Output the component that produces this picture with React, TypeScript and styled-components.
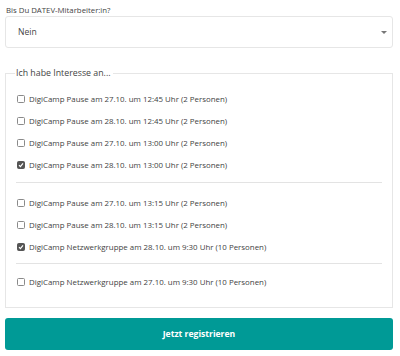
import React from "react";
import styled, { createGlobalStyle } from "styled-components";

const Global = createGlobalStyle`
  html, body { margin: 0; padding: 0; background: #fff; }
  body { font-family: "Open Sans", "Noto Sans", sans-serif; color: #444; }
`;

const Page = styled.div`
  width: 388px;
  margin-left: 5px;
  display: flex;
  flex-direction: column;
`;

const Label = styled.div`
  font-size: 7.8px;
  line-height: 12px;
  color: #444;
  padding: 4px 0 0 1px;
  height: 12px;
`;

const Select = styled.div`
  box-sizing: border-box;
  height: 32px;
  border: 1px solid #e6e6e6;
  border-radius: 3px;
  display: flex;
  align-items: center;
  justify-content: space-between;
  padding: 0 5px 0 12px;
  font-size: 8.6px;
  color: #444;
`;

const Caret = styled.span`
  width: 0;
  height: 0;
  border-left: 3px solid transparent;
  border-right: 3px solid transparent;
  border-top: 3px solid #777;
`;

const Fieldset = styled.fieldset`
  box-sizing: border-box;
  margin: 19px 0 0;
  border: 1px solid #e6e6e6;
  padding: 9px 10px 14px 10px;
  min-width: 0;
`;

const Legend = styled.legend`
  font-size: 8.8px;
  line-height: 12px;
  color: #444;
  padding: 0 2px 0 1px;
  margin-left: -1px;
`;

const Group = styled.div`
  display: flex;
  flex-direction: column;
`;

const Row = styled.label`
  display: flex;
  align-items: center;
  height: 22px;
  font-size: 7.9px;
  color: #3f3f3f;
  gap: 4px;
`;

const Box = styled.span<{ $checked?: boolean }>`
  box-sizing: border-box;
  width: 8px;
  height: 8px;
  margin-left: 1px;
  border-radius: 1.5px;
  border: 1px solid ${(p) => (p.$checked ? "#555" : "#8a8a8a")};
  background: ${(p) => (p.$checked ? "#555" : "#fff")};
  display: flex;
  align-items: center;
  justify-content: center;
`;

const Sep = styled.hr<{ $above: number; $below: number }>`
  border: none;
  border-top: 1px solid #e3e3e3;
  margin: ${(p) => p.$above}px 0 ${(p) => p.$below}px;
  width: 366px;
`;

const Button = styled.button`
  margin-top: 10px;
  height: 32px;
  border: none;
  border-radius: 3px;
  background: #009a96;
  color: #fff;
  font-family: "Open Sans", "Noto Sans", sans-serif;
  font-weight: 700;
  font-size: 8.6px;
`;

const Check = ({ checked }: { checked?: boolean }) => (
  <Box $checked={checked}>
    {checked && (
      <svg width="6" height="6" viewBox="0 0 6 6">
        <path d="M1 3.2 L2.4 4.6 L5 1.4" stroke="#fff" strokeWidth="1.2" fill="none" />
      </svg>
    )}
  </Box>
);

const groups: { text: string; checked?: boolean }[][] = [
  [
    { text: "DigiCamp Pause am 27.10. um 12:45 Uhr (2 Personen)" },
    { text: "DigiCamp Pause am 28.10. um 12:45 Uhr (2 Personen)" },
    { text: "DigiCamp Pause am 27.10. um 13:00 Uhr (2 Personen)" },
    { text: "DigiCamp Pause am 28.10. um 13:00 Uhr (2 Personen)", checked: true },
  ],
  [
    { text: "DigiCamp Pause am 27.10. um 13:15 Uhr (2 Personen)" },
    { text: "DigiCamp Pause am 28.10. um 13:15 Uhr (2 Personen)" },
    { text: "DigiCamp Netzwerkgruppe am 28.10. um 9:30 Uhr (10 Personen)", checked: true },
  ],
  [{ text: "DigiCamp Netzwerkgruppe am 27.10. um 9:30 Uhr (10 Personen)" }],
];

const seps = [
  { above: 6, below: 9 },
  { above: 5, below: 7 },
];

export default function App() {
  return (
    <>
      <Global />
      <Page>
        <Label>Bis Du DATEV-Mitarbeiter:in?</Label>
        <Select>
          <span>Nein</span>
          <Caret />
        </Select>
        <Fieldset>
          <Legend>Ich habe Interesse an...</Legend>
          {groups.map((g, gi) => (
            <React.Fragment key={gi}>
              {gi > 0 && <Sep $above={seps[gi - 1].above} $below={seps[gi - 1].below} />}
              <Group>
                {g.map((r) => (
                  <Row key={r.text}>
                    <Check checked={r.checked} />
                    {r.text}
                  </Row>
                ))}
              </Group>
            </React.Fragment>
          ))}
        </Fieldset>
        <Button>Jetzt registrieren</Button>
      </Page>
    </>
  );
}
